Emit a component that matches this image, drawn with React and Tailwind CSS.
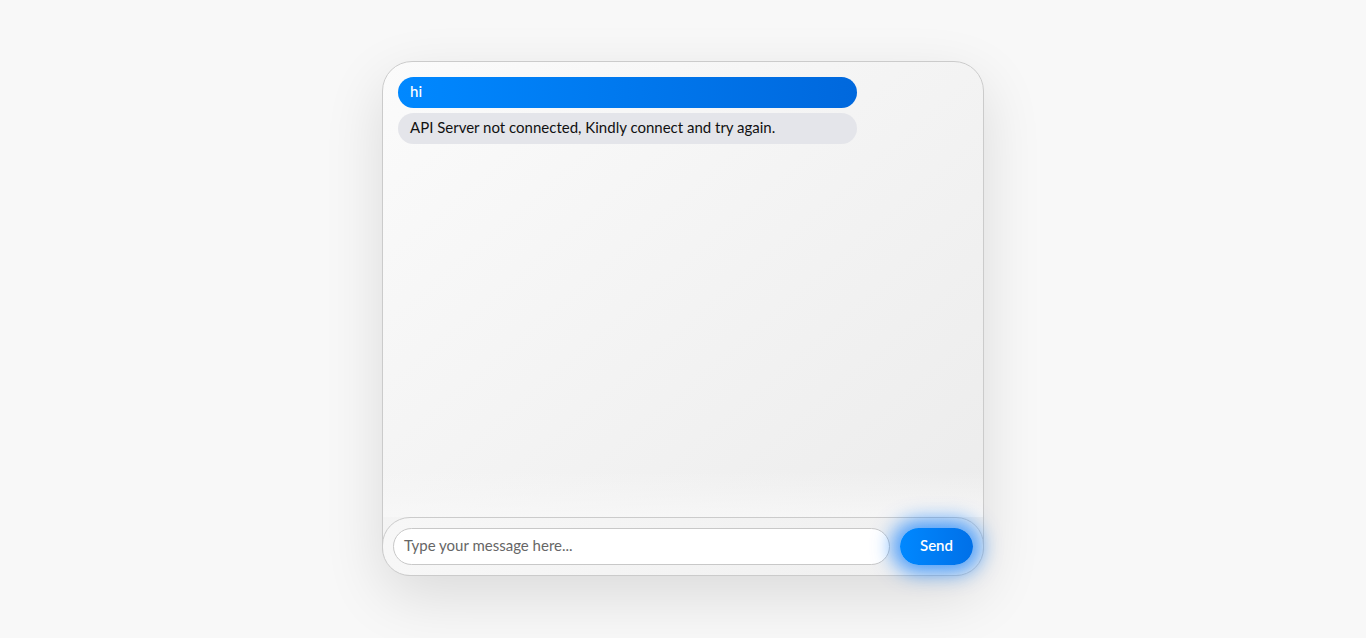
export default function App() {
  return (
    <div className="w-full h-[638px] bg-[#f8f8f8] flex items-start justify-center pt-[61px]" style={{ fontFamily: '"Lato", "Noto Sans", sans-serif' }}>
      <div className="w-[602px] h-[515px] rounded-[30px] border border-[#cbcbcb] bg-gradient-to-br from-[#fbfbfb] to-[#ebebeb] shadow-[0_20px_60px_rgba(0,0,0,0.12)] flex flex-col">
        <div className="flex-1 flex flex-col gap-[5px] px-[15px] pt-[15px]">
          <div className="w-[459px] h-[31px] rounded-full bg-gradient-to-r from-[#0088ff] to-[#0068dd] text-white text-[15px] font-medium px-[12px] pb-[2px] flex items-center">
            hi
          </div>
          <div className="w-[459px] h-[31px] rounded-full bg-[#e4e5ea] text-[#111] text-[15px] px-[12px] pb-[2px] flex items-center">
            API Server not connected, Kindly connect and try again.
          </div>
        </div>
        <div className="h-[46px] bg-gradient-to-b from-transparent to-[#f8f8f8]/80"></div>
        <div className="h-[59px] -mx-px -mb-px rounded-[28px] border border-[#cbcbcb] bg-gradient-to-r from-[#f7f7f7] to-[#efefef] flex items-center px-[10px] gap-[10px]">
          <div className="flex-1 h-[37px] rounded-full border border-[#c8c8c8] bg-white flex items-center px-[10px] pb-[2px] text-[15px] text-[#666]">
            Type your message here...
          </div>
          <div className="w-[73px] h-[37px] rounded-full bg-gradient-to-r from-[#0088ff] to-[#0070e8] text-white text-[15px] font-semibold pb-[2px] flex items-center justify-center shadow-[0_0_20px_8px_rgba(0,120,255,0.7)]">
            Send
          </div>
        </div>
      </div>
    </div>
  );
}
